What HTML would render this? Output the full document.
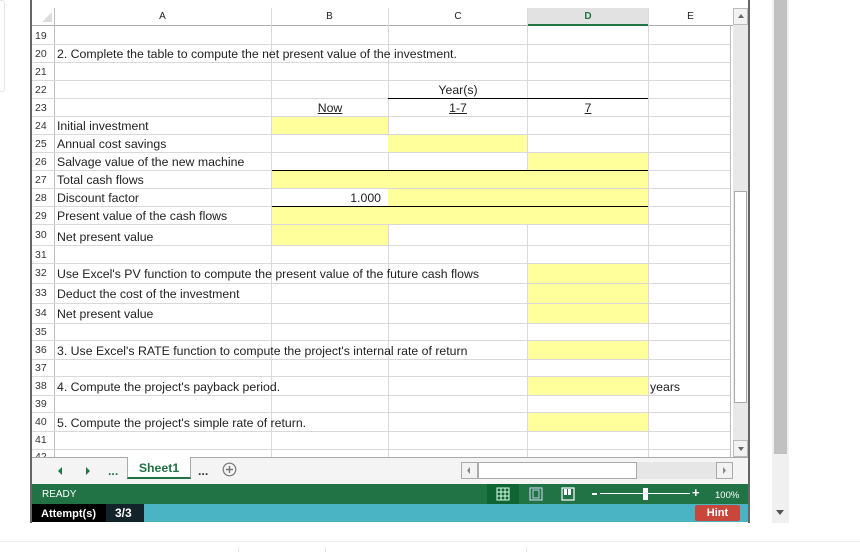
<!DOCTYPE html>
<html><head><meta charset="utf-8"><style>
*{margin:0;padding:0;box-sizing:border-box}
body{width:860px;height:552px;background:#fff;position:relative;overflow:hidden;font-family:"Liberation Sans",sans-serif;font-size:12px;color:#222}
.a{position:absolute}
.hl{position:absolute;height:1px;background:#d9d9d9}
.vl{position:absolute;width:1px;background:#d9d9d9}
.y{position:absolute;background:#ffff9c}
.t{position:absolute;white-space:nowrap;font-size:12.3px;line-height:14px}
.rn{position:absolute;left:32px;width:22px;font-size:10.5px;color:#333;padding-left:3px;line-height:12px}
.bk{position:absolute;height:1px;background:#000}
</style></head><body>
<div class="a" style="left:0;top:0;width:5px;height:92px;border:1px solid #e6e6e6;border-left:none;border-radius:0 3px 3px 0"></div>
<div class="a" style="left:30px;top:0;width:720px;height:523px;border-left:2px solid #666;border-right:2px solid #666"></div>
<!-- header row -->
<div class="a" style="left:32px;top:8px;width:701px;height:18px;background:#fff;border-bottom:1px solid #ababab"></div>
<div class="a" style="left:528px;top:8px;width:120px;height:18px;background:#e2e2e2;border-bottom:2px solid #217346"></div>
<svg class="a" style="left:42px;top:12px" width="11" height="11"><polygon points="10,0 10,10 0,10" fill="#dcdcdc"/></svg>
<div class="t" style="left:54px;top:10px;width:217px;text-align:center;font-size:10px">A</div>
<div class="t" style="left:271px;top:10px;width:117px;text-align:center;font-size:10px">B</div>
<div class="t" style="left:388px;top:10px;width:140px;text-align:center;font-size:10px">C</div>
<div class="t" style="left:528px;top:10px;width:120px;text-align:center;font-size:10px;color:#217346;font-weight:bold">D</div>
<div class="t" style="left:648px;top:10px;width:85px;text-align:center;font-size:10px">E</div>
<div class="vl" style="left:54px;top:8px;height:449px;background:#bdbdbd"></div>
<div class="vl" style="left:271px;top:8px;height:449px"></div>
<div class="vl" style="left:388px;top:8px;height:449px"></div>
<div class="vl" style="left:527px;top:8px;height:449px"></div>
<div class="vl" style="left:648px;top:8px;height:449px"></div>
<div class="vl" style="left:730px;top:26px;height:431px;background:#bdbdbd"></div>
<!-- yellow -->
<div class="y" style="left:272px;top:117px;width:116px;height:17px"></div>
<div class="y" style="left:388px;top:135px;width:139px;height:17px"></div>
<div class="y" style="left:528px;top:153px;width:120px;height:17px"></div>
<div class="y" style="left:272px;top:171px;width:376px;height:17px"></div>
<div class="y" style="left:388px;top:189px;width:260px;height:17px"></div>
<div class="y" style="left:272px;top:207px;width:376px;height:17px"></div>
<div class="y" style="left:272px;top:225px;width:116px;height:20px"></div>
<div class="y" style="left:528px;top:263px;width:120px;height:60px"></div>
<div class="y" style="left:528px;top:341px;width:120px;height:18px"></div>
<div class="y" style="left:528px;top:377px;width:120px;height:18px"></div>
<div class="y" style="left:528px;top:413px;width:120px;height:18px"></div>
<!-- rows -->
<div class="hl" style="left:32px;top:44px;width:698px"></div>
<div class="hl" style="left:32px;top:62px;width:698px"></div>
<div class="hl" style="left:32px;top:80px;width:698px"></div>
<div class="hl" style="left:32px;top:98px;width:698px"></div>
<div class="hl" style="left:32px;top:116px;width:698px"></div>
<div class="hl" style="left:32px;top:134px;width:698px"></div>
<div class="hl" style="left:32px;top:152px;width:698px"></div>
<div class="hl" style="left:32px;top:170px;width:698px"></div>
<div class="hl" style="left:32px;top:188px;width:698px"></div>
<div class="hl" style="left:32px;top:206px;width:698px"></div>
<div class="hl" style="left:32px;top:224px;width:698px"></div>
<div class="hl" style="left:32px;top:245px;width:698px"></div>
<div class="hl" style="left:32px;top:263px;width:698px"></div>
<div class="hl" style="left:32px;top:283px;width:698px"></div>
<div class="hl" style="left:32px;top:303px;width:698px"></div>
<div class="hl" style="left:32px;top:323px;width:698px"></div>
<div class="hl" style="left:32px;top:340px;width:698px"></div>
<div class="hl" style="left:32px;top:359px;width:698px"></div>
<div class="hl" style="left:32px;top:376px;width:698px"></div>
<div class="hl" style="left:32px;top:395px;width:698px"></div>
<div class="hl" style="left:32px;top:412px;width:698px"></div>
<div class="hl" style="left:32px;top:431px;width:698px"></div>
<div class="hl" style="left:32px;top:449px;width:698px"></div>
<div class="bk" style="left:388px;top:98px;width:260px"></div>
<div class="bk" style="left:272px;top:170px;width:376px"></div>
<div class="bk" style="left:272px;top:206px;width:376px"></div>
<!-- row numbers -->
<div class="rn" style="top:30px">19</div><div class="rn" style="top:48px">20</div>
<div class="rn" style="top:66px">21</div><div class="rn" style="top:84px">22</div>
<div class="rn" style="top:102px">23</div><div class="rn" style="top:120px">24</div>
<div class="rn" style="top:138px">25</div><div class="rn" style="top:156px">26</div>
<div class="rn" style="top:174px">27</div><div class="rn" style="top:192px">28</div>
<div class="rn" style="top:210px">29</div><div class="rn" style="top:229px">30</div>
<div class="rn" style="top:249px">31</div><div class="rn" style="top:267px">32</div>
<div class="rn" style="top:287px">33</div><div class="rn" style="top:307px">34</div>
<div class="rn" style="top:326px">35</div><div class="rn" style="top:344px">36</div>
<div class="rn" style="top:362px">37</div><div class="rn" style="top:380px">38</div>
<div class="rn" style="top:398px">39</div><div class="rn" style="top:416px">40</div>
<div class="rn" style="top:434px">41</div><div class="rn" style="top:451px;height:6px;overflow:hidden">42</div>
<!-- texts -->
<div class="t" style="left:57px;top:47px">2. Complete the table to compute the net present value of the investment.</div>
<div class="t" style="left:388px;top:83px;width:140px;text-align:center">Year(s)</div>
<div class="t" style="left:272px;top:101px;width:116px;text-align:center"><u>Now</u></div>
<div class="t" style="left:388px;top:101px;width:140px;text-align:center"><u>1-7</u></div>
<div class="t" style="left:528px;top:101px;width:120px;text-align:center"><u>7</u></div>
<div class="t" style="left:57px;top:119px">Initial investment</div>
<div class="t" style="left:57px;top:137px">Annual cost savings</div>
<div class="t" style="left:57px;top:155px">Salvage value of the new machine</div>
<div class="t" style="left:57px;top:173px">Total cash flows</div>
<div class="t" style="left:57px;top:191px">Discount factor</div>
<div class="t" style="left:272px;top:191px;width:109px;text-align:right">1.000</div>
<div class="t" style="left:57px;top:209px">Present value of the cash flows</div>
<div class="t" style="left:57px;top:230px">Net present value</div>
<div class="t" style="left:57px;top:267px">Use Excel's PV function to compute the present value of the future cash flows</div>
<div class="t" style="left:57px;top:287px">Deduct the cost of the investment</div>
<div class="t" style="left:57px;top:307px">Net present value</div>
<div class="t" style="left:57px;top:344px">3. Use Excel's RATE function to compute the project's internal rate of return</div>
<div class="t" style="left:57px;top:380px">4. Compute the project's payback period.</div>
<div class="t" style="left:650px;top:380px">years</div>
<div class="t" style="left:57px;top:416px">5. Compute the project's simple rate of return.</div>
<!-- vscroll -->
<div class="a" style="left:733px;top:8px;width:15px;height:449px;background:#e8e8e8"></div>
<div class="a" style="left:733px;top:8px;width:15px;height:17px;background:#f2f2f2;border:1px solid #bbb"></div>
<svg class="a" style="left:737px;top:13px" width="8" height="6"><polygon points="4,1 7,5 1,5" fill="#666"/></svg>
<div class="a" style="left:734px;top:191px;width:13px;height:212px;background:#fff;border:1px solid #aaa"></div>
<div class="a" style="left:733px;top:440px;width:15px;height:17px;background:#f2f2f2;border:1px solid #bbb"></div>
<svg class="a" style="left:737px;top:446px" width="8" height="6"><polygon points="1,1 7,1 4,5" fill="#666"/></svg>
<!-- tab bar -->
<div class="a" style="left:32px;top:457px;width:716px;height:27px;background:#f4f4f4;border-top:1px solid #aaa"></div>
<svg class="a" style="left:58px;top:466px" width="40" height="10"><polygon points="4,1 0,5 4,9" fill="#217346"/><polygon points="28,1 32,5 28,9" fill="#217346"/></svg>
<div class="t" style="left:108px;top:464px;font-weight:bold;color:#217346">...</div>
<div class="a" style="left:127px;top:457px;width:64px;height:22px;background:#fff;border:1px solid #aaa;border-top:none;border-bottom:2px solid #217346"></div>
<div class="t" style="left:127px;top:461px;width:64px;text-align:center;font-weight:bold;color:#217346">Sheet1</div>
<div class="t" style="left:198px;top:464px;font-weight:bold;color:#333">...</div>
<svg class="a" style="left:222px;top:462px" width="15" height="15"><circle cx="7.5" cy="7.5" r="6.3" fill="none" stroke="#777" stroke-width="1.2"/><path d="M7.5 4v7M4 7.5h7" stroke="#777" stroke-width="1.4"/></svg>
<div class="a" style="left:461px;top:462px;width:272px;height:17px;background:#e6e6e6"></div>
<div class="a" style="left:461px;top:462px;width:17px;height:17px;background:#f2f2f2;border:1px solid #aaa"></div>
<svg class="a" style="left:466px;top:466px" width="6" height="9"><polygon points="4,1 1,4.5 4,8" fill="#888"/></svg>
<div class="a" style="left:478px;top:462px;width:159px;height:17px;background:#fff;border:1px solid #aaa"></div>
<div class="a" style="left:716px;top:462px;width:17px;height:17px;background:#f2f2f2;border:1px solid #aaa"></div>
<svg class="a" style="left:721px;top:466px" width="6" height="9"><polygon points="2,1 5,4.5 2,8" fill="#888"/></svg>
<!-- status -->
<div class="a" style="left:32px;top:484px;width:716px;height:20px;background:#217346"></div>
<div class="t" style="left:42px;top:488px;font-size:10px;color:#fff">READY</div>
<div class="a" style="left:487px;top:484px;width:32px;height:20px;background:#0e6533"></div>
<svg class="a" style="left:496px;top:487px" width="14" height="14"><rect x="1" y="1" width="12" height="12" fill="none" stroke="#dfe" stroke-width="1"/><path d="M5 1v12M9 1v12M1 5h12M1 9h12" stroke="#dfe"/></svg>
<svg class="a" style="left:529px;top:487px" width="14" height="14"><rect x="1" y="1" width="12" height="12" fill="none" stroke="#bcd" stroke-width="1.2"/><rect x="4" y="3" width="6" height="8" fill="none" stroke="#bcd"/></svg>
<svg class="a" style="left:561px;top:487px" width="14" height="14"><rect x="1" y="1" width="12" height="12" fill="none" stroke="#fff" stroke-width="1.2"/><rect x="3" y="2" width="3" height="6" fill="#fff"/><rect x="7" y="2" width="3" height="6" fill="#fff"/></svg>
<div class="a" style="left:592px;top:493px;width:5px;height:2px;background:#fff"></div>
<div class="a" style="left:600px;top:493px;width:90px;height:1px;background:#fff"></div>
<div class="a" style="left:643px;top:488px;width:5px;height:12px;background:#fff"></div>
<div class="t" style="left:692px;top:486px;font-size:13px;color:#fff;font-weight:bold">+</div>
<div class="t" style="left:715px;top:489px;font-size:9.5px;color:#fff">100%</div>
<!-- teal bar -->
<div class="a" style="left:32px;top:504px;width:716px;height:18px;background:#4ab4c4"></div>
<div class="a" style="left:32px;top:504px;width:74px;height:18px;background:#000"></div>
<div class="t" style="left:41px;top:507px;font-size:11px;font-weight:bold;color:#fff">Attempt(s)</div>
<div class="a" style="left:106px;top:504px;width:38px;height:18px;background:#12232a"></div>
<div class="t" style="left:115px;top:506px;font-size:12px;font-weight:bold;color:#fff">3/3</div>
<div class="a" style="left:695px;top:505px;width:45px;height:16px;background:#c9463b;border-radius:2px"></div>
<div class="t" style="left:695px;top:506px;width:45px;text-align:center;font-size:11px;font-weight:bold;color:#fff">Hint</div>
<!-- outer scrollbar -->
<div class="a" style="left:772px;top:0;width:17px;height:523px;background:#f0f0f0"></div>
<div class="a" style="left:774px;top:0;width:13px;height:454px;background:#c1c1c1"></div>
<svg class="a" style="left:776px;top:510px" width="9" height="6"><polygon points="0,0 8,0 4,5" fill="#555"/></svg>
<div class="a" style="left:0;top:541px;width:860px;height:1px;background:#eee"></div>
<div class="a" style="left:238px;top:547px;width:1px;height:5px;background:#e6e6e6"></div>
<div class="a" style="left:325px;top:547px;width:1px;height:5px;background:#e6e6e6"></div>
<div class="a" style="left:526px;top:547px;width:1px;height:5px;background:#e6e6e6"></div>
</body></html>
